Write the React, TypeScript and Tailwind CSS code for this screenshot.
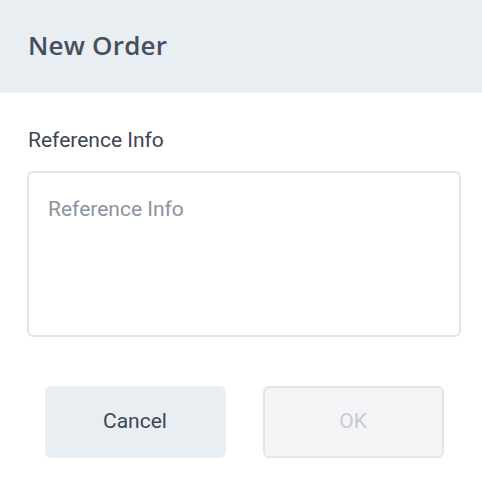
// New Order dialog

function App() {
    return (
        <div className="w-[482px] h-[484px] bg-white font-['Roboto',sans-serif] overflow-hidden">
            {/* Header */}
            <div className="h-[93px] bg-[#e9eef3] flex items-center pl-[28px]">
                <h1 className="font-['Open_Sans',sans-serif] text-[26px] font-semibold text-[#454f5d] tracking-[0.2px] mt-[-3px]">
                    New Order
                </h1>
            </div>

            {/* Body */}
            <div className="pl-[27px] pr-[21px] pt-[33px]">
                <label className="block pl-[1px] text-[21px] leading-[28px] text-[#3c4553]">Reference Info</label>
                <textarea
                    placeholder="Reference Info"
                    className="mt-[17px] block w-full h-[166px] resize-none rounded-[6px] border-2 border-[#e1e5ea] px-[19px] py-[22px] text-[21px] leading-[28px] text-[#3c4553] placeholder:text-[#8a949f] outline-none"
                />

                {/* Actions */}
                <div className="mt-[49px] flex justify-center gap-[37px]">
                    <button className="w-[181px] h-[72px] rounded-[6px] bg-[#e9eef3] text-[21px] text-[#3c4553]">
                        Cancel
                    </button>
                    <button disabled className="w-[181px] h-[72px] rounded-[6px] bg-[#f3f4f6] border-2 border-[#e2e5e9] text-[21px] text-[#c6cbd2]">
                        OK
                    </button>
                </div>
            </div>
        </div>
    );
}

export default App;
